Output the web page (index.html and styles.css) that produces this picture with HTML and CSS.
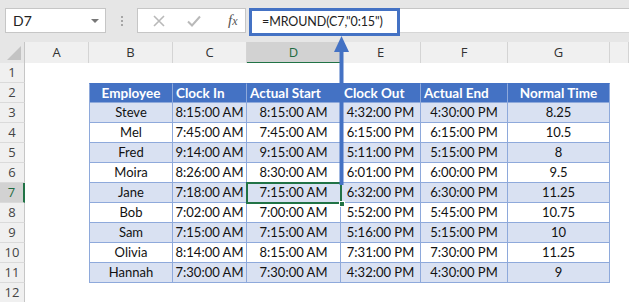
FILE: index.html
```html
<!DOCTYPE html>
<html>
<head>
<meta charset="utf-8">
<link rel="stylesheet" href="styles.css">
</head>
<body>
<div class="app">
  <div class="toolbar">
    <div class="namebox"><span class="nb-text">D7</span><span class="caret"></span></div>
    <div class="grip"><i></i><i></i><i></i></div>
    <div class="fbtns">
      <svg class="ico-x" width="12" height="12" viewBox="0 0 12 12"><path d="M1 1L11 11M11 1L1 11" stroke="#b9b9b9" stroke-width="1.6" fill="none"/></svg>
      <svg class="ico-chk" width="14" height="12" viewBox="0 0 14 12"><path d="M1 6.5L5 10.5L13 1.5" stroke="#b9b9b9" stroke-width="2" fill="none"/></svg>
      <span class="fx">f<span class="fx-x">x</span></span>
    </div>
    <div class="fbar"><div class="finput">=MROUND(C7,"0:15")</div></div>
  </div>

  <div class="sheet">
    <div class="row colhdr">
      <div class="corner"><svg width="16" height="16" viewBox="0 0 16 16"><path d="M15 1V15H1Z" fill="#c3c3c3"/></svg></div>
      <div class="ch">A</div><div class="ch">B</div><div class="ch">C</div><div class="ch sel">D</div><div class="ch">E</div><div class="ch">F</div><div class="ch">G</div><div class="ch"></div>
    </div>
    <div class="row"><div class="rh">1</div><div class="e"></div><div class="e"></div><div class="e"></div><div class="e"></div><div class="e"></div><div class="e"></div><div class="e"></div><div class="e"></div></div>
    <div class="row"><div class="rh">2</div><div class="e"></div>
      <div class="h first">Employee</div><div class="h left">Clock In</div><div class="h left">Actual Start</div><div class="h left">Clock Out</div><div class="h left">Actual End</div><div class="h">Normal Time</div><div class="e"></div></div>
    <div class="row"><div class="rh">3</div><div class="e"></div>
      <div class="c alt first">Steve</div><div class="c alt">8:15:00 AM</div><div class="c alt">8:15:00 AM</div><div class="c alt">4:32:00 PM</div><div class="c alt">4:30:00 PM</div><div class="c alt">8.25</div><div class="e"></div></div>
    <div class="row"><div class="rh">4</div><div class="e"></div>
      <div class="c first">Mel</div><div class="c">7:45:00 AM</div><div class="c">7:45:00 AM</div><div class="c">6:15:00 PM</div><div class="c">6:15:00 PM</div><div class="c">10.5</div><div class="e"></div></div>
    <div class="row"><div class="rh">5</div><div class="e"></div>
      <div class="c alt first">Fred</div><div class="c alt">9:14:00 AM</div><div class="c alt">9:15:00 AM</div><div class="c alt">5:11:00 PM</div><div class="c alt">5:15:00 PM</div><div class="c alt">8</div><div class="e"></div></div>
    <div class="row"><div class="rh">6</div><div class="e"></div>
      <div class="c first">Moira</div><div class="c">8:26:00 AM</div><div class="c">8:30:00 AM</div><div class="c">6:01:00 PM</div><div class="c">6:00:00 PM</div><div class="c">9.5</div><div class="e"></div></div>
    <div class="row"><div class="rh sel">7</div><div class="e"></div>
      <div class="c alt first">Jane</div><div class="c alt">7:18:00 AM</div><div class="c alt">7:15:00 AM</div><div class="c alt">6:32:00 PM</div><div class="c alt">6:30:00 PM</div><div class="c alt">11.25</div><div class="e"></div></div>
    <div class="row"><div class="rh">8</div><div class="e"></div>
      <div class="c first">Bob</div><div class="c">7:02:00 AM</div><div class="c">7:00:00 AM</div><div class="c">5:52:00 PM</div><div class="c">5:45:00 PM</div><div class="c">10.75</div><div class="e"></div></div>
    <div class="row"><div class="rh">9</div><div class="e"></div>
      <div class="c alt first">Sam</div><div class="c alt">7:15:00 AM</div><div class="c alt">7:15:00 AM</div><div class="c alt">5:16:00 PM</div><div class="c alt">5:15:00 PM</div><div class="c alt">10</div><div class="e"></div></div>
    <div class="row"><div class="rh">10</div><div class="e"></div>
      <div class="c first">Olivia</div><div class="c">8:14:00 AM</div><div class="c">8:15:00 AM</div><div class="c">7:31:00 PM</div><div class="c">7:30:00 PM</div><div class="c">11.25</div><div class="e"></div></div>
    <div class="row"><div class="rh">11</div><div class="e"></div>
      <div class="c alt first">Hannah</div><div class="c alt">7:30:00 AM</div><div class="c alt">7:30:00 AM</div><div class="c alt">4:32:00 PM</div><div class="c alt">4:30:00 PM</div><div class="c alt">9</div><div class="e"></div></div>
    <div class="row"><div class="rh">12</div><div class="e"></div><div class="e"></div><div class="e"></div><div class="e"></div><div class="e"></div><div class="e"></div><div class="e"></div><div class="e"></div></div>
  </div>

  <div class="selbox"><span class="handle"></span></div>
  <svg class="arrow" width="20" height="152" viewBox="0 0 20 152">
    <path d="M8.5 16H12.5V150H8.5Z" fill="#4472c4"/>
    <path d="M10.5 1L18 17H3Z" fill="#4472c4"/>
  </svg>
</div>
</body>
</html>
```

FILE: styles.css
```css
* { box-sizing: border-box; }
html, body { margin: 0; padding: 0; }
body {
  width: 629px;
  height: 302px;
  overflow: hidden;
  background: #ffffff;
  font-family: "Lato", "Open Sans", sans-serif;
}
.app {
  position: relative;
  width: 629px;
  height: 302px;
  overflow: hidden;
}
.toolbar {
  height: 42px;
  background: #e6e6e6;
  display: flex;
  align-items: flex-start;
  padding: 8px 0 0 5px;
}
.namebox {
  width: 101px;
  height: 25px;
  background: #fff;
  border: 1px solid #c6c6c6;
  display: flex;
  align-items: center;
  justify-content: space-between;
  padding: 0 6px 0 7px;
  font-family: "Lato", sans-serif;
  font-size: 14px;
  color: #222;
}
.caret {
  width: 0; height: 0;
  border-left: 4px solid transparent;
  border-right: 4px solid transparent;
  border-top: 4px solid #777;
}
.grip {
  width: 31px;
  height: 25px;
  display: flex;
  flex-direction: column;
  align-items: center;
  justify-content: center;
  gap: 2px;
}
.grip i {
  display: block;
  width: 2px; height: 2px;
  background: #a6a6a6;
}
.fbtns {
  width: 109px;
  height: 25px;
  background: #fff;
  border: 1px solid #c6c6c6;
  display: flex;
  align-items: center;
  padding-left: 15px;
}
.ico-chk { margin-left: 22px; }
.fx {
  margin-left: 27px;
  font-family: "Liberation Serif", serif;
  font-style: italic;
  font-size: 15px;
  color: #555;
}
.fx-x { font-size: 12px; }
.fbar {
  flex: 1;
  height: 25px;
  margin-left: 3px;
  background: #fff;
  border-top: 1px solid #c6c6c6;
  border-bottom: 1px solid #d6d6d6;
}
.finput {
  width: 151px;
  height: 28px;
  margin-top: -1px;
  border: 3px solid #4472c4;
  padding-left: 10px;
  font-family: "Lato", sans-serif;
  font-size: 12.5px;
  letter-spacing: -0.1px;
  line-height: 21px;
  color: #222;
  background: #fff;
  white-space: nowrap;
}
.row {
  display: grid;
  grid-template-columns: 25px 64px 84px 74px 94px 80px 87px 102px 19px;
  height: 20px;
}
.colhdr { height: 21px; }
.corner {
  background: #e6e6e6;
  border-right: 1px solid #c6c6c6;
  border-bottom: 1px solid #ababab;
  display: flex;
  align-items: flex-end;
  justify-content: flex-end;
  padding: 0 2px 2px 0;
}
.ch {
  background: #f0f0f0;
  border-right: 1px solid #d4d4d4;
  border-bottom: 1px solid #ababab;
  font-family: "Open Sans", sans-serif;
  font-size: 13px;
  color: #333;
  text-align: center;
  line-height: 20px;
}
.ch.sel {
  background: #d2d2d2;
  border-bottom: 2px solid #217346;
  color: #1e6b41;
}
.rh {
  background: #f0f0f0;
  border-right: 1px solid #c6c6c6;
  border-bottom: 1px solid #dadada;
  font-family: "Open Sans", sans-serif;
  font-size: 13px;
  color: #444;
  text-align: center;
  line-height: 19px;
}
.rh.sel {
  background: #d2d2d2;
  border-right: 2px solid #217346;
  color: #1e6b41;
}
.e { background: #fff; }
.h, .c {
  border-right: 1px solid #8ea9db;
  border-bottom: 1px solid #8ea9db;
  text-align: center;
  font-size: 13px;
  line-height: 19px;
  white-space: nowrap;
  overflow: hidden;
}
.first { border-left: 1px solid #8ea9db; }
.h {
  background: #4472c4;
  color: #fff;
  font-weight: bold;
  font-size: 13.5px;
  border-top: 1px solid #4472c4;
  border-right-color: #8ea9db;
  line-height: 18px;
}
.h.left { text-align: left; padding-left: 3px; }
.c { background: #fff; color: #111; }
.c.alt { background: #d9e1f2; }
.selbox {
  position: absolute;
  left: 246px;
  top: 182px;
  width: 96px;
  height: 22px;
  border: 2px solid #217346;
}
.handle {
  position: absolute;
  right: -5px;
  bottom: -5px;
  width: 6px;
  height: 6px;
  background: #217346;
  border: 1px solid #fff;
}
.arrow {
  position: absolute;
  left: 331px;
  top: 35px;
}
```
